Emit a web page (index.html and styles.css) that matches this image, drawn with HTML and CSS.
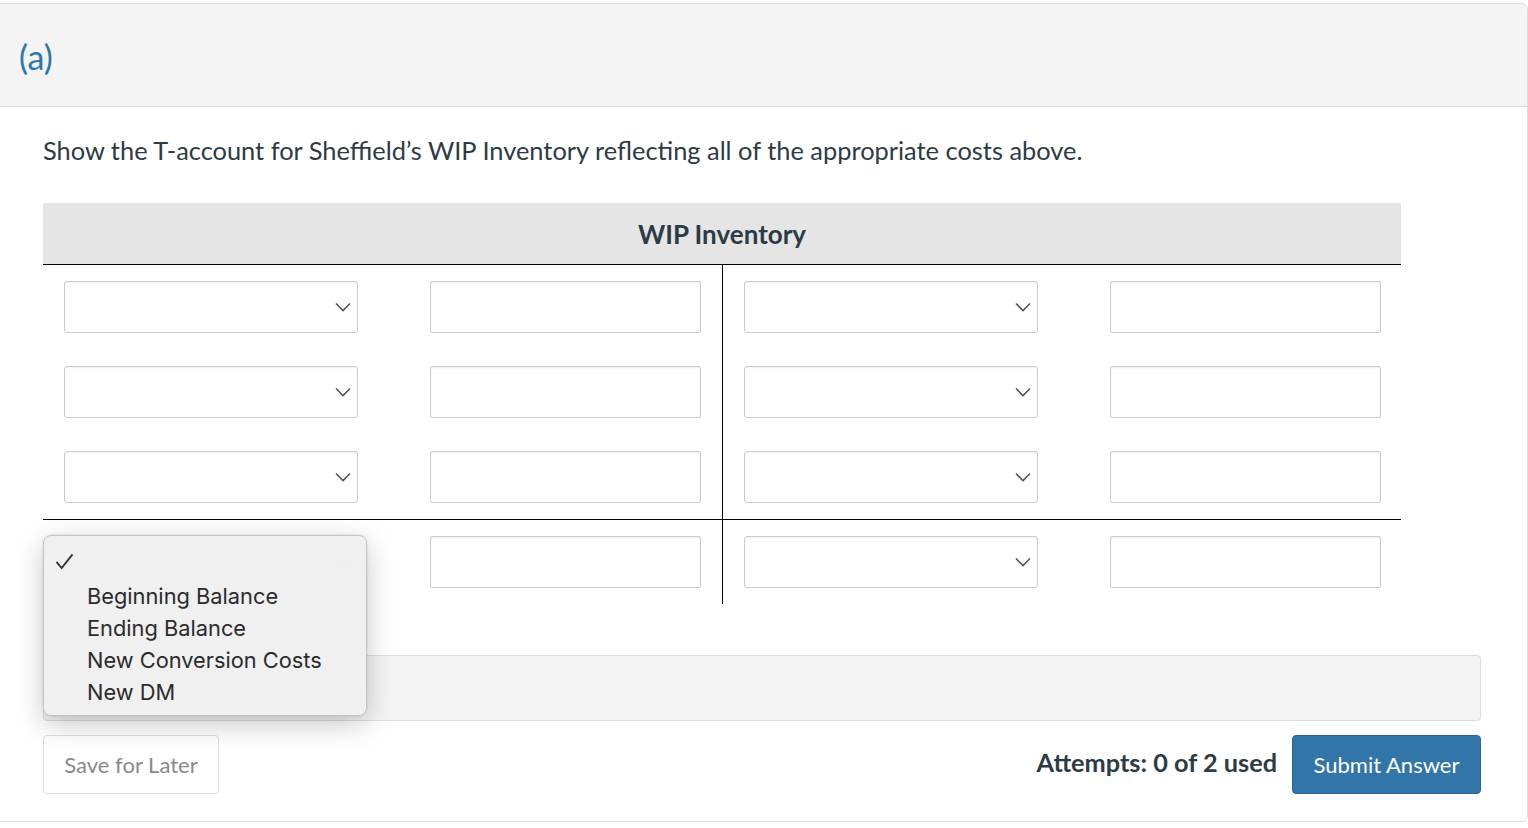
FILE: index.html
```html
<!DOCTYPE html>
<html lang="en">
<head>
    <meta charset="UTF-8">
    <meta name="viewport" content="width=device-width, initial-scale=1.0">
    <title>WIP Inventory</title>
    <link rel="stylesheet" href="styles.css">
</head>
<body>
    <div class="card">
        <div class="part-head">
            <span class="part-label">(a)</span>
        </div>
        <div class="part-body">
            <p class="question">Show the T-account for Sheffield’s WIP Inventory reflecting all of the appropriate costs above.</p>

            <div class="t-account">
                <div class="t-title">WIP Inventory</div>
                <div class="t-section t-main">
                    <div class="t-side">
                        <div class="t-row">
                            <div class="select-box"><select class="select"><option></option></select><svg class="chev" viewBox="0 0 16 10"><path d="M1 1.5 L8 8.5 L15 1.5" /></svg></div>
                            <input class="amount" type="text">
                        </div>
                        <div class="t-row">
                            <div class="select-box"><select class="select"><option></option></select><svg class="chev" viewBox="0 0 16 10"><path d="M1 1.5 L8 8.5 L15 1.5" /></svg></div>
                            <input class="amount" type="text">
                        </div>
                        <div class="t-row">
                            <div class="select-box"><select class="select"><option></option></select><svg class="chev" viewBox="0 0 16 10"><path d="M1 1.5 L8 8.5 L15 1.5" /></svg></div>
                            <input class="amount" type="text">
                        </div>
                    </div>
                    <div class="t-side t-right">
                        <div class="t-row">
                            <div class="select-box"><select class="select"><option></option></select><svg class="chev" viewBox="0 0 16 10"><path d="M1 1.5 L8 8.5 L15 1.5" /></svg></div>
                            <input class="amount" type="text">
                        </div>
                        <div class="t-row">
                            <div class="select-box"><select class="select"><option></option></select><svg class="chev" viewBox="0 0 16 10"><path d="M1 1.5 L8 8.5 L15 1.5" /></svg></div>
                            <input class="amount" type="text">
                        </div>
                        <div class="t-row">
                            <div class="select-box"><select class="select"><option></option></select><svg class="chev" viewBox="0 0 16 10"><path d="M1 1.5 L8 8.5 L15 1.5" /></svg></div>
                            <input class="amount" type="text">
                        </div>
                    </div>
                </div>
                <div class="t-section t-total">
                    <div class="t-side">
                        <div class="t-row">
                            <div class="select-box open">
                                <select class="select"><option></option></select><svg class="chev" viewBox="0 0 16 10"><path d="M1 1.5 L8 8.5 L15 1.5" /></svg>
                                <ul class="menu">
                                    <li class="menu-item checked"><svg class="check" viewBox="0 0 20 18"><path d="M1.5 9.5 L7 16 L18.5 1.5" /></svg></li>
                                    <li class="menu-item">Beginning Balance</li>
                                    <li class="menu-item">Ending Balance</li>
                                    <li class="menu-item">New Conversion Costs</li>
                                    <li class="menu-item">New DM</li>
                                </ul>
                            </div>
                            <input class="amount" type="text">
                        </div>
                    </div>
                    <div class="t-side t-right">
                        <div class="t-row">
                            <div class="select-box"><select class="select"><option></option></select><svg class="chev" viewBox="0 0 16 10"><path d="M1 1.5 L8 8.5 L15 1.5" /></svg></div>
                            <input class="amount" type="text">
                        </div>
                    </div>
                </div>
            </div>

            <div class="feedback"></div>

            <div class="actions">
                <button class="btn-save">Save for Later</button>
                <div class="submit-group">
                    <span class="attempts">Attempts: 0 of 2 used</span>
                    <button class="btn-submit">Submit Answer</button>
                </div>
            </div>
        </div>
    </div>
</body>
</html>
```

FILE: styles.css
```css
body {
    margin: 0;
    background: #fff;
    font-family: Lato, "Open Sans", sans-serif;
    color: #2d3b45;
    overflow: hidden;
}
.card {
    margin: 3px 0 0 -4px;
    width: 1532px;
    border: 1px solid #ddd;
    border-radius: 6px;
    box-sizing: border-box;
    background: #fff;
}
.part-head {
    height: 102px;
    background-color: #f4f4f4;
    border-bottom: 1px solid #ddd;
    border-radius: 6px 6px 0 0;
    padding-left: 22px;
    display: flex;
    align-items: center;
}
.part-label {
    color: #2f76a9;
    font-size: 34px;
    margin-top: 2px;
}
.part-body {
    padding: 27px 46px 27px 46px;
}
.question {
    margin: 0;
    font-size: 25.4px;
    line-height: 32px;
}

/* T-account */
.t-account {
    width: 1358px;
    margin-top: 37px;
}
.t-title {
    height: 61px;
    background-color: #e5e5e5;
    border-bottom: 1px solid #000;
    display: flex;
    align-items: center;
    justify-content: center;
    font-size: 26px;
    font-weight: 700;
}
.t-section {
    display: flex;
}
.t-main {
    border-bottom: 1px solid #000;
}
.t-side {
    width: 679px;
    padding: 16px 21px 16px 21px;
    box-sizing: border-box;
    display: flex;
    flex-direction: column;
    gap: 33px;
}
.t-right {
    border-left: 1px solid #000;
    padding-right: 20px;
}
.t-row {
    display: flex;
    justify-content: space-between;
}
.select-box {
    position: relative;
    width: 294px;
    height: 52px;
}
.select {
    appearance: none;
    -webkit-appearance: none;
    width: 100%;
    height: 100%;
    border: 1px solid #ccc;
    border-radius: 3px;
    background: #fff;
    box-shadow: inset 0 1px 2px rgba(0, 0, 0, 0.06);
    font-family: inherit;
    font-size: 18px;
    margin: 0;
}
.chev {
    position: absolute;
    right: 7px;
    top: 21px;
    width: 16px;
    height: 10px;
    fill: none;
    stroke: #555;
    stroke-width: 1.6;
    pointer-events: none;
}
.amount {
    width: 271px;
    height: 52px;
    box-sizing: border-box;
    border: 1px solid #ccc;
    border-radius: 2px;
    box-shadow: inset 0 1px 2px rgba(0, 0, 0, 0.07);
    font-family: inherit;
    font-size: 18px;
    margin: 0;
}

/* open dropdown */
.menu {
    position: absolute;
    left: -21px;
    top: -1px;
    width: 324px;
    height: 181px;
    box-sizing: border-box;
    margin: 0;
    padding: 12px 0 8px 0;
    list-style: none;
    background: rgba(240, 240, 240, 0.98);
    border: 1px solid #c4c4c4;
    border-radius: 8px;
    box-shadow: 0 8px 28px rgba(0, 0, 0, 0.22), 0 0 2px rgba(0, 0, 0, 0.15);
    z-index: 5;
    font-family: Inter, "Noto Sans", sans-serif;
    font-size: 21.8px;
    color: #2b2b2b;
}
.menu-item {
    height: 32px;
    line-height: 32px;
    padding-left: 43px;
    position: relative;
}
.check {
    position: absolute;
    left: 11px;
    top: 5px;
    width: 19px;
    height: 17px;
    fill: none;
    stroke: #333;
    stroke-width: 2;
}

.feedback {
    margin-top: 51px;
    height: 66px;
    box-sizing: border-box;
    background-color: #f4f4f4;
    border: 1px solid #ddd;
    border-radius: 4px;
}
.actions {
    margin-top: 14px;
    display: flex;
    justify-content: space-between;
    align-items: center;
}
.btn-save {
    width: 176px;
    height: 59px;
    background: #fff;
    border: 1px solid #ddd;
    border-radius: 4px;
    color: #8a8a8a;
    font-family: inherit;
    font-size: 22px;
    padding-bottom: 2px;
    cursor: pointer;
}
.submit-group {
    display: flex;
    align-items: center;
    gap: 15px;
}
.attempts {
    font-size: 25.3px;
    font-weight: 700;
    margin-bottom: 5px;
}
.btn-submit {
    width: 189px;
    height: 59px;
    background-color: #3276a9;
    border: 1px solid #2a6694;
    border-radius: 4px;
    color: #fff;
    font-family: inherit;
    font-size: 22px;
    padding-bottom: 2px;
    cursor: pointer;
}
```
